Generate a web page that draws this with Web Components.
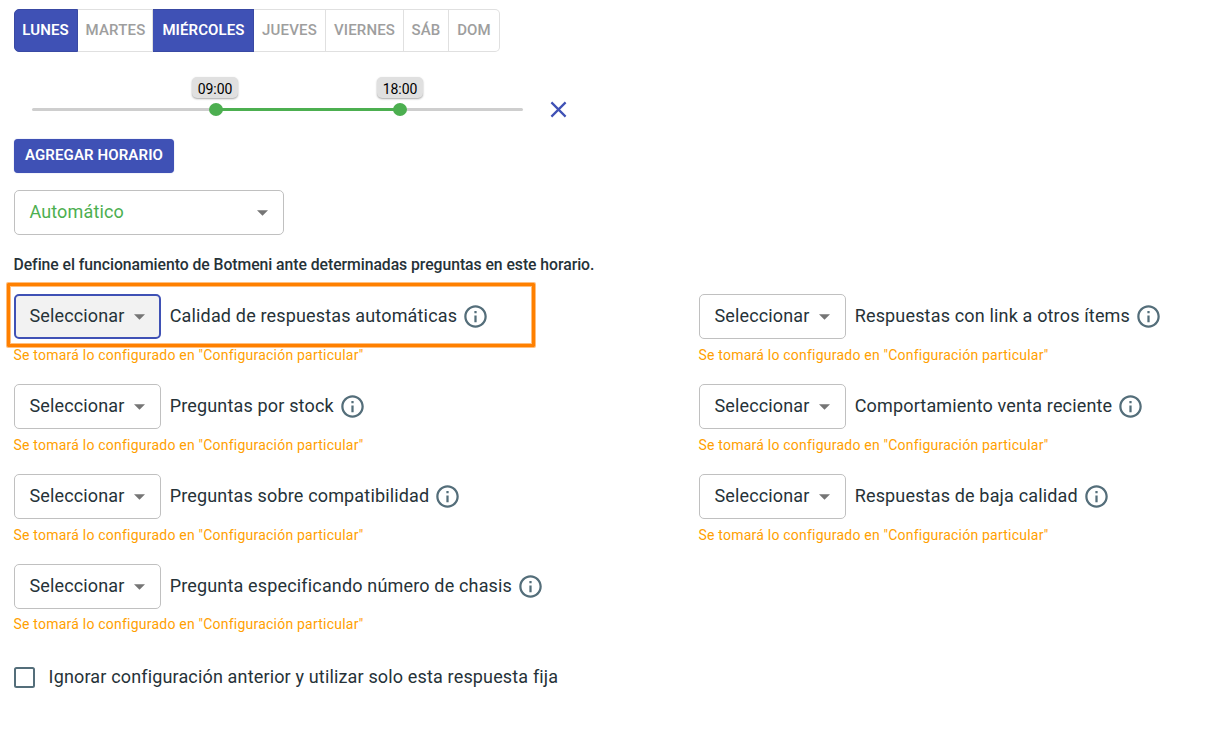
<!DOCTYPE html>
<html lang="es">
<head>
<meta charset="utf-8">
<title>Horarios</title>
<style>
body{margin:0;background:#fff;font-family:Roboto,sans-serif;color:#263238}
</style>
</head>
<body>
<schedule-page></schedule-page>
<script>
const define = (name, html, init) => customElements.define(name, class extends HTMLElement {
  connectedCallback() {
    if (this.shadowRoot) return;
    const t = document.createElement('template');
    t.innerHTML = html;
    this.attachShadow({mode: 'open'}).append(t.content.cloneNode(true));
    if (init) init(this, this.shadowRoot);
  }
});

define('day-toggle', `<style>
:host{display:flex;align-items:center;justify-content:center;box-sizing:border-box;height:43px;border:1px solid #e0e0e0;border-left-width:0;color:#9e9e9e;font-size:15px;font-weight:500;letter-spacing:.16px;line-height:20px;padding-bottom:2px;white-space:nowrap}
:host([selected]){background:#3f51b5;border-color:#3949a3;color:#fff;font-weight:600;letter-spacing:.1px}
:host(:first-child){border-left-width:1px;border-radius:5px 0 0 5px;padding-right:1px}
:host(:last-child){border-radius:0 5px 5px 0}
:host(:nth-child(2)),:host(:nth-child(3)){padding-left:1px}
</style><slot></slot>`);

define('day-group', `<style>
:host{display:grid;grid-template-columns:64px 75px 101px 72px 78px 45px 51px;width:486px}
</style><slot></slot>`);

define('time-range', `<style>
:host{display:flex;align-items:center;height:24px;padding-left:18px;gap:27px}
.rail{position:relative;width:491px;height:3px;border-radius:2px;background:#cecece}
.track{position:absolute;left:184px;width:184px;top:0;height:3px;background:#4caf50}
.dot{position:absolute;top:-5px;width:14px;height:13px;border-radius:50%;background:#4caf50;margin-left:-7px}
.tip{position:absolute;top:-31px;width:46px;height:21px;margin-left:-23.500px;border-radius:5px;background:#e0e0e0;box-shadow:0 1px 2px rgba(0,0,0,.35);color:#000;font-size:14px;letter-spacing:-.1px;line-height:24px;text-align:center}
svg{display:block}
</style><div class="rail"><div class="track"></div><div class="dot" style="left:184px"></div><div class="dot" style="left:368px"></div>
<div class="tip" style="left:183.500px">09:00</div><div class="tip" style="left:368.500px">18:00</div></div>
<svg width="17" height="17" viewBox="0 0 17 17"><path d="M1.400 1.400 15.600 15.600M15.600 1.400 1.400 15.600" stroke="#3f51b5" stroke-width="2.200"/></svg>`);

define('action-button', `<style>
:host{display:flex;align-items:center;justify-content:center;width:160px;height:34px;box-sizing:border-box;padding-bottom:2px;border-radius:4px;background:#3f51b5;color:#fff;font-size:15px;font-weight:600;letter-spacing:.12px;box-shadow:0 0 1px rgba(63,81,181,.6)}
</style><slot></slot>`);

define('select-box', `<style>
:host{display:flex;align-items:center;justify-content:space-between;box-sizing:border-box;width:147px;height:45px;padding:0 15px 0 14.400px;border:1px solid #c0c0c0;border-radius:5px;font-size:18px;letter-spacing:.15px;line-height:22px;white-space:nowrap}
:host([wide]){width:270px;color:#4caf50}
:host([active]){border:2px solid #3f51b5;padding:0 14px 0 13.400px;background:#f2f2f2}
span{padding-bottom:2px}
svg{display:block}
</style><span><slot></slot></span><svg width="11" height="6" viewBox="0 0 11 6"><path d="M0 .2H11L5.5 5.8Z" fill="#757575"/></svg>`);

define('info-icon', `<style>:host{display:block}svg{display:block}</style>
<svg width="27" height="27" viewBox="0 0 24 24" fill="#546e7a"><path d="M11 7h2v2h-2zm0 4h2v6h-2zm1-9C6.480 2 2 6.480 2 12s4.480 10 10 10 10-4.480 10-10S17.520 2 12 2zm0 18c-4.410 0-8-3.590-8-8s3.590-8 8-8 8 3.590 8 8-3.590 8-8 8z"/></svg>`);

define('config-item', `<style>
:host{display:block}
.row{display:flex;align-items:center;height:45px}
.label{margin-left:8.700px;font-size:18px;letter-spacing:.163px;line-height:22px;padding-bottom:2px;white-space:nowrap}
info-icon{margin-left:5px}
.hint{margin:7px 0 0 -.5px;font-size:14px;letter-spacing:.22px;line-height:18px;color:#ffa000;white-space:nowrap}
:host([last]) .hint{margin-top:6px}
</style><div class="row"><select-box>Seleccionar</select-box><span class="label"><slot></slot></span><info-icon></info-icon></div>
<div class="hint">Se tomará lo configurado en "Configuración particular"</div>`,
(el, root) => { if (el.hasAttribute('active')) root.querySelector('select-box').setAttribute('active', ''); });

define('highlight-frame', `<style>
:host{position:absolute;box-sizing:border-box;left:-7px;top:-11px;width:528px;height:64px;border:3px solid #ff8000;border-radius:1px;box-shadow:0 0 0 1px rgba(255,128,0,.5),inset 0 0 0 1px rgba(255,128,0,.5);pointer-events:none}
</style>`);

define('check-field', `<style>
:host{display:flex;align-items:center;height:24px;font-size:18px;letter-spacing:.155px}
svg{display:block;margin:-2px 13.600px 0 0}
span{padding-bottom:2px;line-height:22px}
</style><svg width="21" height="21" viewBox="0 0 21 21"><rect x="1" y="1" width="19" height="19" rx="1.500" fill="none" stroke="#546e7a" stroke-width="2"/></svg><span><slot></slot></span>`);

define('schedule-page', `<style>
:host{display:flex;flex-direction:column;box-sizing:border-box;width:1212px;height:731px;padding:9px 0 0 14px;overflow:hidden}
time-range{margin-top:45px}
action-button{margin-top:18px}
select-box{margin-top:17px}
.intro{margin:19px 0 0 -.5px;font-size:15.750px;letter-spacing:-.048px;font-weight:500;line-height:22px;white-space:nowrap}
.grid{position:relative;display:grid;grid-template-columns:685px 500px;grid-template-rows:90px 90px 90px 90px;margin-top:18px}
check-field{margin-top:12px}
</style>
<day-group><day-toggle selected>LUNES</day-toggle><day-toggle>MARTES</day-toggle><day-toggle selected>MIÉRCOLES</day-toggle><day-toggle>JUEVES</day-toggle><day-toggle>VIERNES</day-toggle><day-toggle>SÁB</day-toggle><day-toggle>DOM</day-toggle></day-group>
<time-range></time-range>
<action-button>AGREGAR HORARIO</action-button>
<select-box wide>Automático</select-box>
<div class="intro">Define el funcionamiento de Botmeni ante determinadas preguntas en este horario.</div>
<div class="grid">
<config-item active>Calidad de respuestas automáticas</config-item>
<config-item>Respuestas con link a otros ítems</config-item>
<config-item>Preguntas por stock</config-item>
<config-item>Comportamiento venta reciente</config-item>
<config-item>Preguntas sobre compatibilidad</config-item>
<config-item>Respuestas de baja calidad</config-item>
<config-item last>Pregunta especificando número de chasis</config-item>
<highlight-frame></highlight-frame>
</div>
<check-field>Ignorar configuración anterior y utilizar solo esta respuesta fija</check-field>`);
</script>
</body>
</html>
